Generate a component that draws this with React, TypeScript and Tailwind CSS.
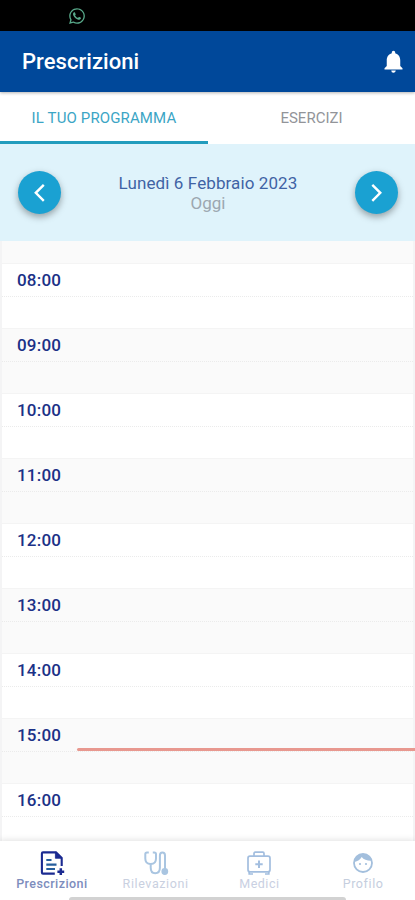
import React from "react";
import { FaWhatsapp } from "react-icons/fa";
import { MdNotifications } from "react-icons/md";

const hours = ["08:00", "09:00", "10:00", "11:00", "12:00", "13:00", "14:00", "15:00", "16:00"];

function RoundButton({ direction }: { direction: "left" | "right" }) {
  return (
    <button
      aria-label={direction === "left" ? "Giorno precedente" : "Giorno successivo"}
      className="flex size-[43px] shrink-0 items-center justify-center rounded-full bg-[#1aa1d2] shadow-[0_3px_7px_rgba(0,0,0,0.35)]"
    >
      <svg width="43" height="43" viewBox="0 0 43 43" fill="none" stroke="white" strokeWidth="2.4">
        <path d={direction === "left" ? "M25.8 13.8L17.8 21.8L25.8 29.8" : "M17.3 13.8L25.3 21.8L17.3 29.8"} />
      </svg>
    </button>
  );
}

function PrescriptionIcon() {
  return (
    <svg width="26" height="26" viewBox="0 0 26 26" fill="none" stroke="#1b2a91" strokeWidth="2.1">
      <path d="M15.8 23.6H4Q2.9 23.6 2.9 22.4V3.6Q2.9 2.4 4 2.4H17L22.7 8V16" />
      <path d="M16.4 2V8.3H22.8Z" fill="#1b2a91" strokeWidth="0.8" />
      <path d="M7.3 10H12.5M7.3 14.6H17.5M7.3 19H16" stroke="#275f9d" />
      <path d="M21.8 18.3V25M18.4 21.7H25.2" strokeWidth="2.5" />
    </svg>
  );
}

function StethoscopeIcon() {
  return (
    <svg width="26" height="26" viewBox="0 0 26 26" fill="none" stroke="#a9c5e1" strokeWidth="2">
      <path d="M5.8 2.4H4Q2.3 2.4 2.3 4.2V8.5Q2.3 14 7.7 14Q13 14 13 8.5V4.2Q13 2.4 11.3 2.4H9.8" />
      <path d="M7.7 14V17.5Q7.7 23.3 12.2 23.3Q16.9 23.3 16.9 17.5V5.4Q16.9 2.4 19.4 2.4Q22 2.4 22 5.4V20" />
      <circle cx="21.8" cy="21.5" r="2.4" fill="#a9c5e1" />
    </svg>
  );
}

function MedicalBagIcon() {
  return (
    <svg width="26" height="26" viewBox="0 0 26 26" fill="none" stroke="#a3bedf" strokeWidth="1.7">
      <path d="M8 6V3.4Q8 2.2 9.2 2.2H16.8Q18 2.2 18 3.4V6" />
      <rect x="2" y="6.2" width="22" height="15.6" rx="2" />
      <path d="M3.2 22V24H7M22.8 22V24H19" />
      <path d="M13 10.6V18M9.3 14.3H16.7" strokeWidth="2" />
    </svg>
  );
}

function FaceIcon() {
  return (
    <svg width="26" height="26" viewBox="0 0 26 26" fill="none" stroke="#a3bfdd" strokeWidth="1.8">
      <circle cx="13" cy="13" r="9" />
      <path d="M4.3 12Q9.5 11 11.7 7Q15 11.2 22 10.8Q20 4 13 4Q6.4 4 4.3 12Z" fill="#a3bfdd" stroke="none" />
      <circle cx="10" cy="14" r="1.1" fill="#a3bfdd" stroke="none" />
      <circle cx="16" cy="14" r="1.1" fill="#a3bfdd" stroke="none" />
    </svg>
  );
}

const navItems = [
  { label: "Prescrizioni", icon: <PrescriptionIcon />, style: "text-[#7d8dbd] font-medium tracking-[0.42px]" },
  { label: "Rilevazioni", icon: <StethoscopeIcon />, style: "text-[#c9d0df] tracking-[0.6px]" },
  { label: "Medici", icon: <MedicalBagIcon />, style: "text-[#c9d0e2] tracking-[0.5px]" },
  { label: "Profilo", icon: <FaceIcon />, style: "text-[#c5cede] tracking-[0.6px]" },
];

export default function App() {
  return (
    <div className="flex h-[900px] w-[415px] flex-col overflow-hidden bg-white font-['Roboto',sans-serif]">
      <div className="h-[31px] shrink-0 bg-black pt-[7px] pl-[68px]">
        <FaWhatsapp size={18} color="#58a98a" />
      </div>

      <header className="z-10 flex h-[61px] shrink-0 items-center justify-between bg-[#00489a] pr-[9px] pl-[22px] shadow-[0_1px_3px_rgba(0,0,0,0.3)]">
        <h1 className="pb-px text-[22px] font-medium tracking-[0.05px] text-white">Prescrizioni</h1>
        <MdNotifications size={27} color="white" className="mr-[-1px]" />
      </header>

      <nav className="flex h-[52px] shrink-0 text-[15px]">
        <div className="flex w-[208px] items-center justify-center border-b-[3px] border-[#229cbd] pt-[3px] tracking-[0.13px] text-[#3ba5c5]">
          IL TUO PROGRAMMA
        </div>
        <div className="flex flex-1 items-center justify-center text-[#929499]">ESERCIZI</div>
      </nav>

      <section className="flex h-[97px] shrink-0 items-center justify-between bg-[#dff3fb] pr-[17px] pl-[18px]">
        <RoundButton direction="left" />
        <div className="text-center">
          <div className="text-[17px] leading-[20px] tracking-[0.1px] text-[#3f63a5]">Lunedì 6 Febbraio 2023</div>
          <div className="text-[17px] leading-[20px] text-[#9ca7b0]">Oggi</div>
        </div>
        <RoundButton direction="right" />
      </section>

      <div className="relative h-[600px] shrink-0">
        <main className="flex h-[600px] flex-col overflow-hidden border-x-2 border-[#f4f4f5]">
          <div className="h-[23px] shrink-0 border-b border-[#f4f4f4] bg-[#fafafa]" />
          {hours.map((hour, index) => (
            <div
              key={hour}
              className={`flex h-[65px] shrink-0 flex-col border-b border-[#f4f4f4] ${index % 2 ? "bg-[#fafafa]" : "bg-white"}`}
            >
              <div className="flex h-[33px] items-center border-b border-dotted border-[#ebebeb] pt-[2px] pl-[15px] text-[17px] font-medium tracking-[0.2px] text-[#1b3187]">
                {hour}
              </div>
            </div>
          ))}
        </main>
        <div className="absolute top-[507px] right-0 left-[77px] h-[3px] rounded-l-full bg-[#e8988f]" />
      </div>

      <footer className="z-10 flex h-[59px] shrink-0 flex-col bg-white shadow-[0_-1px_6px_rgba(0,0,0,0.12)]">
        <div className="flex h-[56px]">
          {navItems.map(({ label, icon, style }) => (
            <div key={label} className="flex flex-1 flex-col items-center pt-[9px]">
              {icon}
              <span className={`text-[12.5px] leading-[16px] ${style}`}>{label}</span>
            </div>
          ))}
        </div>
        <div className="ml-[69px] h-[3px] w-[277px] rounded-t-sm bg-[#d2d2d2]" />
      </footer>
    </div>
  );
}
